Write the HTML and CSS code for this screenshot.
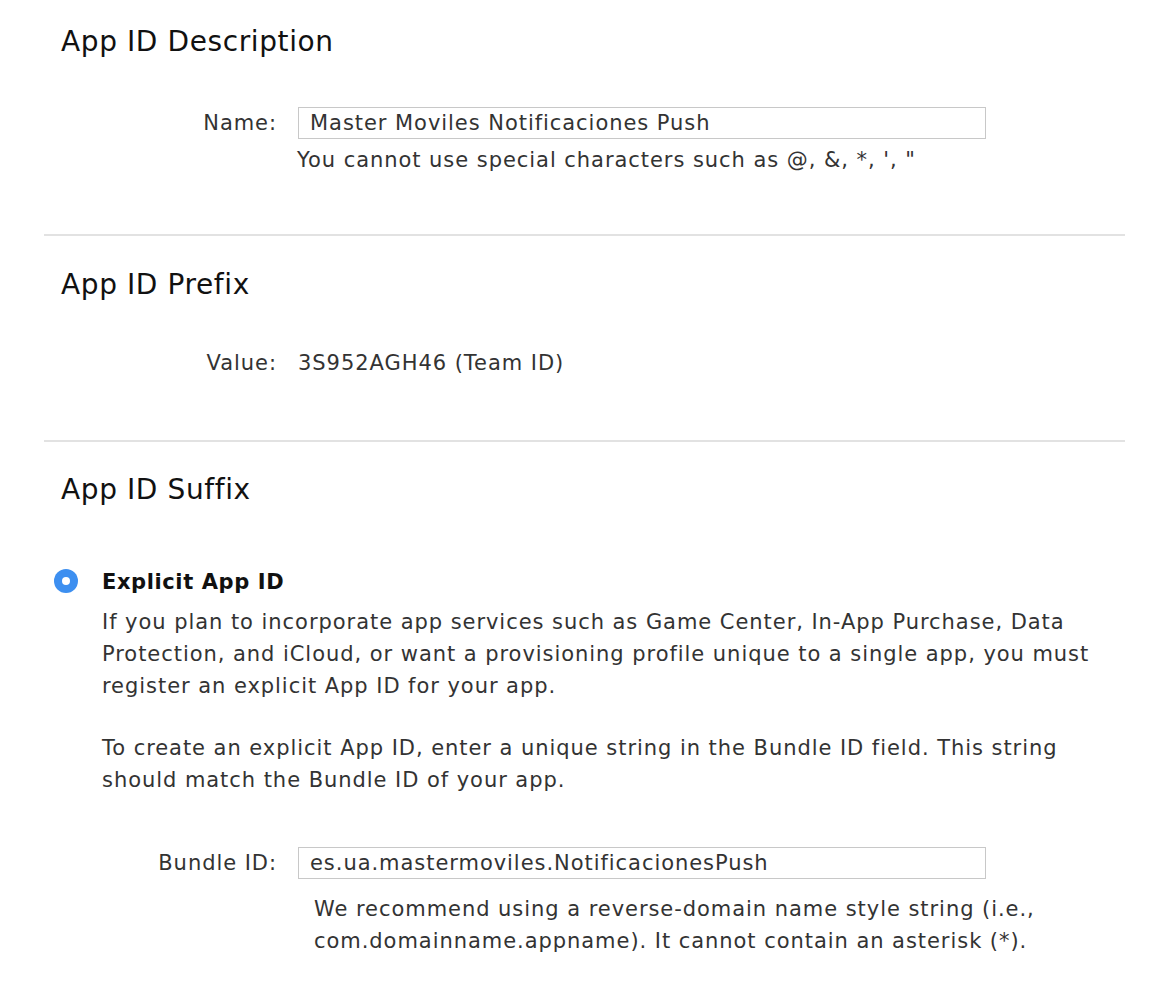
FILE: index.html
```html
<!DOCTYPE html>
<html>
<head>
<meta charset="utf-8">
<link rel="stylesheet" href="styles.css">
</head>
<body>
<div class="page">
  <section class="sec sec-desc">
    <h2 class="heading">App ID Description</h2>
    <div class="row row-name">
      <label class="label">Name:</label>
      <div class="field">
        <div class="input">Master Moviles Notificaciones Push</div>
        <p class="help">You cannot use special characters such as @, &amp;, *, ', "</p>
      </div>
    </div>
  </section>
  <section class="sec sec-prefix">
    <h2 class="heading">App ID Prefix</h2>
    <div class="row row-value">
      <span class="label">Value:</span>
      <span class="value">3S952AGH46 (Team ID)</span>
    </div>
  </section>
  <section class="sec sec-suffix">
    <h2 class="heading">App ID Suffix</h2>
    <div class="option">
      <span class="radio"><span class="dot"></span></span>
      <div class="option-body">
        <div class="option-title">Explicit App ID</div>
        <p class="para">If you plan to incorporate app services such as Game Center, In-App Purchase, Data Protection, and iCloud, or want a provisioning profile unique to a single app, you must register an explicit App ID for your app.</p>
        <p class="para">To create an explicit App ID, enter a unique string in the Bundle ID field. This string should match the Bundle ID of your app.</p>
      </div>
    </div>
    <div class="row row-bundle">
      <label class="label">Bundle ID:</label>
      <div class="field">
        <div class="input">es.ua.mastermoviles.NotificacionesPush</div>
        <p class="help help-bundle">We recommend using a reverse-domain name style string (i.e., com.domainname.appname). It cannot contain an asterisk (*).</p>
      </div>
    </div>
  </section>
</div>
</body>
</html>
```

FILE: styles.css
```css
html, body {
  margin: 0;
  padding: 0;
  background: #fff;
}
body {
  font-family: "DejaVu Sans", "Lucida Grande", sans-serif;
  color: #333;
  font-size: 21px;
  letter-spacing: 0.95px;
}
.page {
  width: 1081px;
  margin-left: 44px;
}
.sec {
  border-bottom: 2px solid #e2e2e2;
  box-sizing: border-box;
}
.sec:last-child {
  border-bottom: none;
}
.heading {
  margin: 0;
  padding-left: 17px;
  font-size: 28px;
  font-weight: normal;
  letter-spacing: 0.6px;
  color: #111;
  line-height: 40px;
}
.sec-desc {
  padding-top: 22px;
  height: 236px;
}
.sec-prefix {
  padding-top: 29px;
  height: 206px;
}
.sec-suffix {
  padding-top: 28px;
}
.row {
  display: flex;
  align-items: flex-start;
}
.label {
  width: 254px;
  flex: none;
  text-align: right;
  line-height: 32px;
  padding-right: 21px;
  box-sizing: border-box;
  color: #333;
}
.row-name {
  margin-top: 45px;
}
.field {
  display: flex;
  flex-direction: column;
}
.input {
  width: 688px;
  height: 32px;
  box-sizing: border-box;
  border: 1px solid #c8c8c8;
  padding-left: 11px;
  line-height: 30px;
  color: #333;
}
.help {
  margin: 5px 0 0 -1px;
  line-height: 32px;
  color: #333;
}
.row-value {
  margin-top: 42px;
  line-height: 32px;
}
.value {
  color: #333;
}
.option {
  display: flex;
  align-items: flex-start;
  margin-top: 57px;
}
.radio {
  width: 24px;
  height: 24px;
  border-radius: 50%;
  background: #3d8ff0;
  display: flex;
  align-items: center;
  justify-content: center;
  margin-left: 10px;
  margin-top: 2px;
  flex: none;
}
.dot {
  width: 8px;
  height: 8px;
  border-radius: 50%;
  background: #fff;
}
.option-body {
  margin-left: 24px;
}
.option-title {
  font-weight: bold;
  line-height: 30px;
  color: #111;
  letter-spacing: 0.6px;
}
.para {
  margin: 9px 0 30px;
  line-height: 32px;
  color: #333;
  width: 1000px;
}
.para + .para {
  margin-top: 0;
}
.row-bundle {
  margin-top: 21px;
}
.help-bundle {
  margin: 14px 0 0 16px;
  width: 760px;
}
```
